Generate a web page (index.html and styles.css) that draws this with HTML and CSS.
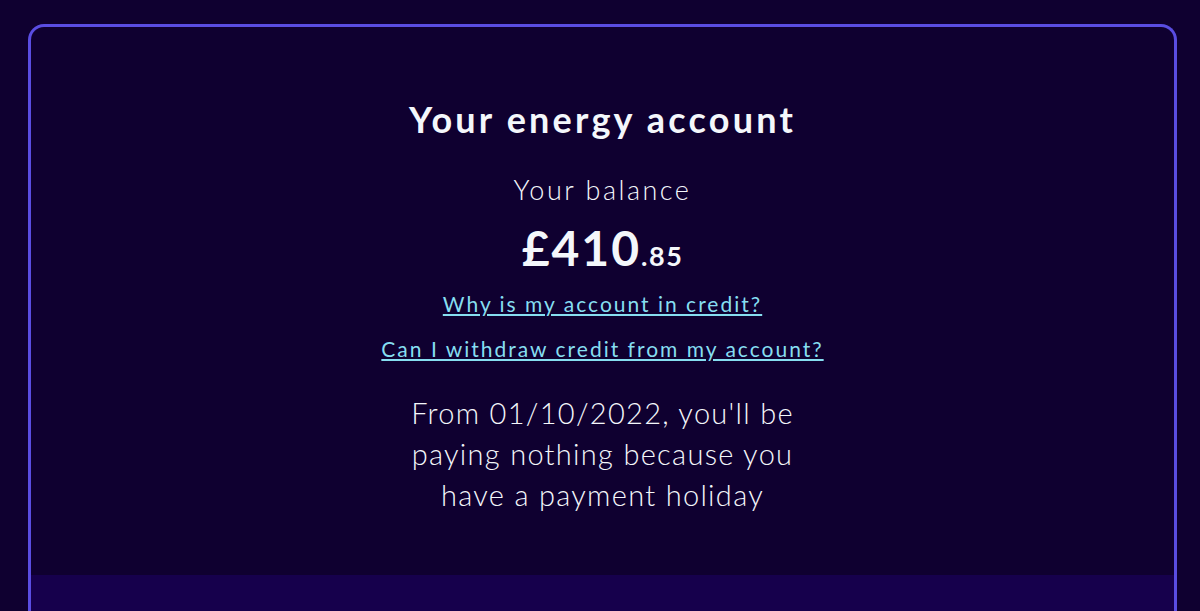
FILE: index.html
```html
<!DOCTYPE html>
<html lang="en">
<head>
    <meta charset="UTF-8">
    <meta name="viewport" content="width=device-width, initial-scale=1.0">
    <title>Your energy account</title>
    <link rel="stylesheet" href="styles.css">
</head>
<body>
    <div class="card">
        <div class="account">
            <h1>Your energy account</h1>
            <p class="balance-label">Your balance</p>
            <p class="balance">£410<span class="pence">.85</span></p>
            <a class="help-link" href="#">Why is my account in credit?</a>
            <a class="help-link" href="#">Can I withdraw credit from my account?</a>
            <p class="payment-note">From 01/10/2022, you'll be paying nothing because you have a payment holiday</p>
        </div>
        <div class="card-footer"></div>
    </div>
</body>
</html>
```

FILE: styles.css
```css
body {
    margin: 0;
    background-color: #0f0030;
    font-family: Lato, "Noto Sans", sans-serif;
    color: #f4f7fb;
    height: 611px;
    overflow: hidden;
}
.card {
    margin: 24px 23px 0 28px;
    border: 3px solid #5a4de2;
    border-bottom: none;
    border-radius: 16px 16px 0 0;
    background-color: #0f0030;
}
.account {
    display: flex;
    flex-direction: column;
    align-items: center;
    text-align: center;
    padding-top: 70px;
    height: 548px;
    box-sizing: border-box;
}
h1 {
    margin: 0;
    font-size: 36px;
    font-weight: 700;
    line-height: 44px;
    letter-spacing: 3.2px;
}
.balance-label {
    margin: 31px 0 0;
    font-size: 27px;
    font-weight: 300;
    line-height: 36px;
    letter-spacing: 2.5px;
}
.balance {
    margin: 12px 0 0;
    font-size: 48px;
    font-weight: 700;
    line-height: 56px;
    letter-spacing: 2px;
}
.pence {
    font-size: 27px;
    letter-spacing: 1.5px;
}
.help-link {
    margin-top: 5px;
    font-size: 21px;
    line-height: 30px;
    color: #86def0;
    letter-spacing: 2px;
}
.help-link + .help-link {
    margin-top: 15px;
}
.payment-note {
    margin: 28px 0 0;
    max-width: 420px;
    font-size: 29px;
    font-weight: 300;
    line-height: 41px;
    letter-spacing: 1.3px;
}
.card-footer {
    height: 40px;
    background-color: #16004c;
}
```
